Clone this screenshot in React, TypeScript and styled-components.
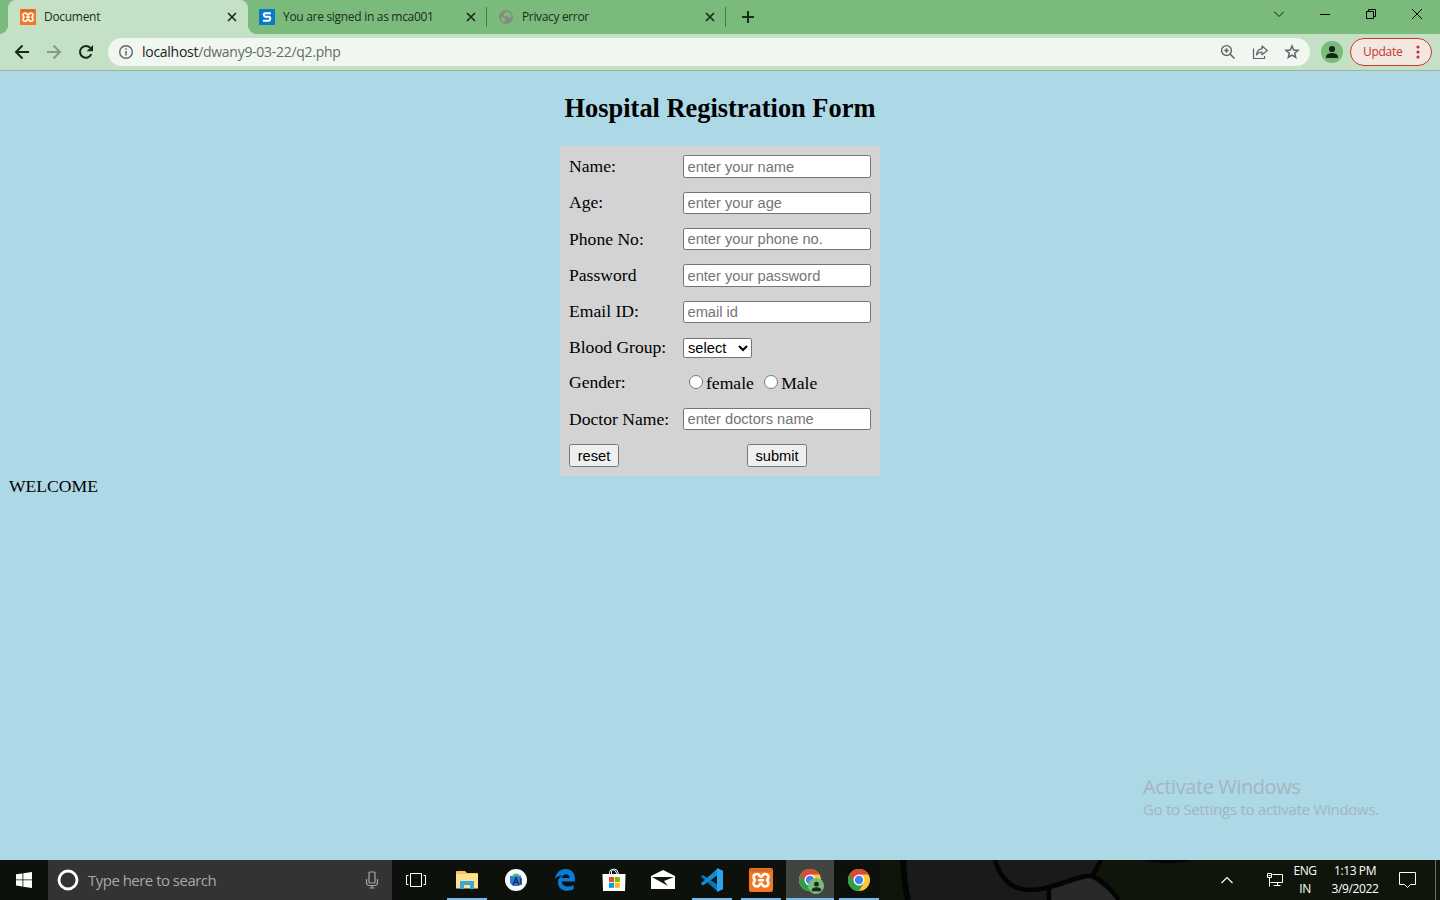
import React from "react";
import styled, { createGlobalStyle } from "styled-components";

const GlobalStyle = createGlobalStyle`
  * { box-sizing: border-box; }
  body { margin: 0; overflow: hidden; }
`;

const ui = `"Open Sans", "Noto Sans", sans-serif`;

const Screen = styled.div`
  position: relative;
  display: flex;
  flex-direction: column;
  width: 1440px;
  height: 900px;
  font-family: ${ui};
`;

/* Browser chrome */
const TabStrip = styled.div`
  display: flex;
  height: 34px;
  padding-left: 8px;
  background: #7aba7b;
`;

const Tab = styled.div<{ $active?: boolean }>`
  position: relative;
  display: flex;
  align-items: center;
  width: ${(p) => (p.$active ? 240 : 239)}px;
  height: 34px;
  padding: 0 9px 0 ${(p) => (p.$active ? 12 : 11)}px;
  border-radius: 8px 8px 0 0;
  background: ${(p) => (p.$active ? "#c5e1c5" : "transparent")};
  color: #1d2b1d;
  &::before, &::after {
    content: "";
    display: ${(p) => (p.$active ? "block" : "none")};
    position: absolute;
    bottom: 0;
    width: 8px;
    height: 8px;
  }
  &::before { left: -8px; background: radial-gradient(circle at 0 0, transparent 7.5px, #c5e1c5 8px); }
  &::after { right: -8px; background: radial-gradient(circle at 100% 0, transparent 7.5px, #c5e1c5 8px); }
`;

const TabDivider = styled.div`
  width: 1px;
  height: 20px;
  margin: 7px 0 0 -1px;
  background: #4b774c;
`;

const Text = styled.span<{ $size: number; $spacing?: number; $color?: string }>`
  font-size: ${(p) => p.$size}px;
  letter-spacing: ${(p) => p.$spacing ?? 0}px;
  color: ${(p) => p.$color ?? "inherit"};
  white-space: nowrap;
  line-height: 1.35;
`;

const TabTitle = styled(Text)`
  flex: 1;
  margin-left: 8px;
`;

const NewTab = styled.div`
  display: flex;
  align-items: center;
  margin-left: 14px;
`;

const WindowButtons = styled.div`
  display: flex;
  margin-left: auto;
  height: 28px;
`;

const WindowButton = styled.div`
  display: flex;
  align-items: center;
  justify-content: center;
  width: 46px;
`;

const Toolbar = styled.div`
  display: flex;
  align-items: center;
  height: 37px;
  padding: 0 8px 1px 6px;
  background: #c5e1c5;
  border-bottom: 1px solid #9eb49e;
`;

const ToolButton = styled.div`
  display: flex;
  align-items: center;
  justify-content: center;
  width: 32px;
`;

const AddressBar = styled.div`
  display: flex;
  align-items: center;
  width: 1202px;
  height: 28px;
  margin-left: 6px;
  padding: 0 2px 0 10px;
  border-radius: 14px;
  background: #f0f7f0;
`;

const Url = styled(Text)`
  flex: 1;
  margin-left: 8px;
  padding-top: 2px;
`;

const Host = styled.span`
  color: #1d221e;
`;

const Avatar = styled.div`
  display: flex;
  align-items: center;
  justify-content: center;
  width: 22px;
  height: 22px;
  margin: 0 7px 0 11px;
  border-radius: 50%;
  background: #7aba7b;
`;

const UpdateButton = styled.div`
  display: flex;
  align-items: center;
  justify-content: space-between;
  width: 82px;
  height: 28px;
  padding: 1px 11px 0 12px;
  border: 1px solid #d0342c;
  border-radius: 14px;
  background: #f2e8e1;
  color: #c5352b;
`;

/* Page */
const Page = styled.main`
  flex: 1;
  padding: 1px 9px 0;
  background: #add8e6;
  font-family: "Liberation Serif", serif;
  font-size: 17.6px;
  color: #000;
`;

const Heading = styled.h2`
  margin: 21px 0 0;
  font-size: 26.4px;
  line-height: 31px;
  text-align: center;
`;

const Form = styled.form`
  display: grid;
  grid-template-columns: 114px 188px;
  grid-template-rows: repeat(5, 36.35px) 35.4px 34.6px 37.6px 35.6px;
  align-items: center;
  width: 320px;
  height: 330px;
  margin: 22px auto 0;
  padding: 2.4px 9px 0;
  background: #d3d3d3;
`;

const Label = styled.label<{ $drop?: number }>`
  padding-top: ${(p) => p.$drop ?? 0}px;
`;

const Field = styled.input`
  width: 188px;
  height: 22.4px;
  margin: 0;
  padding: 1px 3.5px;
  border: 1px solid #767676;
  border-radius: 2.2px;
  background: #fff;
  font: 14.667px "Liberation Sans", sans-serif;
  &::placeholder { color: #757575; }
`;

const Select = styled.select`
  width: 69px;
  height: 20px;
  margin: 0;
  border: 1px solid #767676;
  border-radius: 2px;
  background: #fff;
  color: #000;
  font: 14.667px "Liberation Sans", sans-serif;
`;

const RadioGroup = styled.div`
  display: flex;
  align-items: center;
  padding-top: 1px;
`;

const Radio = styled.input`
  width: 14px;
  height: 14px;
  margin: 0 3.5px 2px 5.5px;
  & ~ & { margin-left: 9.8px; }
`;

const FormButton = styled.button<{ $width: number; $offset?: number }>`
  width: ${(p) => p.$width}px;
  height: 23px;
  margin: 0 0 0 ${(p) => p.$offset ?? 0}px;
  padding: 1px 0 0;
  border: 1px solid #767676;
  border-radius: 2.5px;
  background: #efefef;
  color: #000;
  font: 14.667px "Liberation Sans", sans-serif;
`;

const Welcome = styled.div`
  line-height: 20px;
`;

const Watermark = styled.div`
  position: absolute;
  left: 1143px;
  top: 773px;
  display: flex;
  flex-direction: column;
  color: #a3b6be;
  & > span + span { margin-top: -1px; }
`;

/* Taskbar */
const Taskbar = styled.footer`
  position: relative;
  display: flex;
  height: 40px;
  background: #0c120b;
  color: #fff;
`;

const Wallpaper = styled.svg`
  position: absolute;
  left: 880px;
  top: 0;
`;

const Start = styled.div`
  display: flex;
  align-items: center;
  justify-content: center;
  width: 48px;
`;

const Search = styled.div`
  display: flex;
  align-items: center;
  width: 344px;
  padding: 0 13px 0 9px;
  background: #333;
  color: #a8a8a8;
`;

const SearchText = styled(Text)`
  flex: 1;
  margin-left: 9px;
`;

const Apps = styled.div`
  display: flex;
  gap: 1px;
`;

const AppButton = styled.div<{ $state?: "open" | "active" }>`
  position: relative;
  display: flex;
  align-items: center;
  justify-content: center;
  width: 48px;
  height: 40px;
  background: ${(p) => (p.$state === "active" ? "#40463f" : "transparent")};
  &:first-child { margin-right: 2px; }
  &::after {
    content: "";
    display: ${(p) => (p.$state ? "block" : "none")};
    position: absolute;
    bottom: 0;
    left: ${(p) => (p.$state === "active" ? 0 : 4)}px;
    right: ${(p) => (p.$state === "active" ? 0 : 4)}px;
    height: 2px;
    background: #76b9ed;
  }
`;

const Tray = styled.div`
  position: relative;
  display: flex;
  align-items: center;
  margin-left: auto;
  padding-right: 5px;
`;

const TrayIcon = styled.div<{ $right: number }>`
  display: flex;
  margin-right: ${(p) => p.$right}px;
`;

const TrayText = styled.div<{ $width: number; $right: number }>`
  display: flex;
  flex-direction: column;
  align-items: center;
  width: ${(p) => p.$width}px;
  margin-right: ${(p) => p.$right}px;
  & > span { line-height: 18px; }
`;

const ShowDesktop = styled.div`
  position: absolute;
  right: 4px;
  top: 0;
  width: 1px;
  height: 40px;
  background: #6b6f6b;
`;

const Xampp = ({ size }: { size: number }) => (
  <svg width={size} height={size} viewBox="0 0 24 24">
    <rect width="24" height="24" rx="2" fill="#f37623" />
    <path d="M1 1h22v3H1z" fill="#d96a25" />
    <path
      d="M8.200 6C4.500 6 3.300 9.200 6 12.200 3.300 15 4.500 18.500 8.200 18.500c2.600 0 2-3 3.800-3s1.200 3 3.800 3c3.700 0 4.900-3.500 2.200-6.300C20.700 9.200 19.500 6 15.800 6c-2.600 0-2 3-3.800 3s-1.200-3-3.800-3ZM9.200 12.200h5.600"
      fill="none" stroke="#fff" strokeWidth="2.600" strokeLinejoin="round"
    />
  </svg>
);

const Close = () => (
  <svg width="14" height="14" viewBox="0 0 14 14">
    <path d="M3 3l8 8M11 3l-8 8" stroke="#1d2b1d" strokeWidth="1.700" />
  </svg>
);

const Person = ({ size }: { size: number }) => (
  <svg width={size} height={size} viewBox="0 0 14 14">
    <circle cx="7" cy="4" r="3.100" fill="#17271a" />
    <path d="M1 13v-1.500C1 9 5 8 7 8s6 1 6 3.500V13z" fill="#17271a" />
  </svg>
);

const Chrome = () => (
  <svg width="24" height="24" viewBox="0 0 24 24">
    <circle cx="12" cy="12" r="11" fill="#fcc934" />
    <path d="M12 12L2.470 6.500A11 11 0 0 0 12 23L16.800 14.800Z" fill="#2da04b" />
    <path d="M2.470 6.500A11 11 0 0 1 21.530 6.500H12V12L7.200 14.700Z" fill="#d94a3d" />
    <circle cx="12" cy="12" r="5.500" fill="#fff" />
    <circle cx="12" cy="12" r="4.200" fill="#4583ec" />
  </svg>
);

const ProfileBadge = styled.div`
  position: absolute;
  left: 22px;
  top: 18px;
  display: flex;
  align-items: center;
  justify-content: center;
  width: 16px;
  height: 16px;
  border-radius: 50%;
  background: #7aba7b;
`;

const rows = [
  ["Name:", "enter your name"],
  ["Age:", "enter your age"],
  ["Phone No:", "enter your phone no."],
  ["Password", "enter your password"],
  ["Email ID:", "email id"],
];

export default function App() {
  return (
    <Screen>
      <GlobalStyle />
      <TabStrip>
        <Tab $active>
          <Xampp size={16} />
          <TabTitle $size={12} $spacing={-0.3}>Document</TabTitle>
          <Close />
        </Tab>
        <Tab>
          <svg width="16" height="16" viewBox="0 0 16 16">
            <path d="M0 0h16v16H0z" fill="#0b78d0" />
            <path d="M12 4.300H6.300Q4.800 4.300 4.800 5.800T6.300 7.800H9.800Q11.300 7.800 11.300 9.600T9.800 11.700H4" fill="none" stroke="#fff" strokeWidth="2" />
          </svg>
          <TabTitle $size={12} $spacing={-0.3}>You are signed in as mca001</TabTitle>
          <Close />
        </Tab>
        <TabDivider />
        <Tab>
          <svg width="16" height="16" viewBox="0 0 16 16">
            <circle cx="8" cy="8" r="7" fill="#868b86" />
            <path d="M8.500 2.800L6 4.500 5.800 6.500 8 7.300 10.300 7.800 11 9.300 13.200 8.500C13.600 5.500 12 3 8.500 2.800M2.500 8.500H5.500Q7.800 8.800 7.800 10.800H6.500V13.200Q3 12 2.500 8.500" fill="#7aba7b" />
          </svg>
          <TabTitle $size={12} $spacing={-0.35}>Privacy error</TabTitle>
          <Close />
        </Tab>
        <TabDivider />
        <NewTab>
          <svg width="16" height="16" viewBox="0 0 16 16">
            <path d="M8 2v12M2 8h12" stroke="#1d2b1d" strokeWidth="2" />
          </svg>
        </NewTab>
        <WindowButtons>
          <WindowButton>
            <svg width="10" height="10" viewBox="0 0 10 10"><path d="M0 2.500l5 5 5-5" fill="none" stroke="#111" /></svg>
          </WindowButton>
          <WindowButton>
            <svg width="10" height="10" viewBox="0 0 10 10"><path d="M0 5.500h10" stroke="#000" /></svg>
          </WindowButton>
          <WindowButton>
            <svg width="10" height="10" viewBox="0 0 10 10"><path d="M.5 2.500h7v7h-7zM2.500 2.500v-2h7v7h-2" fill="none" stroke="#000" /></svg>
          </WindowButton>
          <WindowButton>
            <svg width="10" height="10" viewBox="0 0 10 10"><path d="M0 0l10 10M10 0L0 10" stroke="#000" /></svg>
          </WindowButton>
        </WindowButtons>
      </TabStrip>

      <Toolbar>
        <ToolButton>
          <svg width="16" height="16" viewBox="0 0 16 16"><path d="M15 8H2.500M8.500 1.500L2 8l6.500 6.500" fill="none" stroke="#1b261b" strokeWidth="2" /></svg>
        </ToolButton>
        <ToolButton>
          <svg width="16" height="16" viewBox="0 0 16 16"><path d="M1 8h12.500M7.500 1.500L14 8l-6.500 6.500" fill="none" stroke="#869a86" strokeWidth="2" /></svg>
        </ToolButton>
        <ToolButton>
          <svg width="16" height="16" viewBox="0 0 16 16">
            <path d="M13.300 10.200A5.900 5.900 0 1 1 12.300 3.900" fill="none" stroke="#1b261b" strokeWidth="2" />
            <path d="M15 1v6.300H8.700z" fill="#1b261b" />
          </svg>
        </ToolButton>
        <AddressBar>
          <svg width="16" height="16" viewBox="0 0 16 16">
            <circle cx="8" cy="8" r="6.300" fill="none" stroke="#5f6368" strokeWidth="1.400" />
            <path d="M8 7v4.500M8 4.300v1.500" stroke="#5f6368" strokeWidth="1.500" />
          </svg>
          <Url $size={14} $spacing={-0.28} $color="#656b67">
            <Host>localhost</Host>/dwany9-03-22/q2.php
          </Url>
          <ToolButton>
            <svg width="16" height="16" viewBox="0 0 16 16"><circle cx="6.500" cy="6.500" r="4.900" fill="none" stroke="#5f6368" strokeWidth="1.400" /><path d="M10 10l4.500 4.500M6.500 4.300v4.400M4.300 6.500h4.400" stroke="#5f6368" strokeWidth="1.500" /></svg>
          </ToolButton>
          <ToolButton>
            <svg width="16" height="16" viewBox="0 0 16 16"><path d="M1.500 4.500v10h11V12M4.500 11c.3-4 1.500-6 5.500-6.200V2L15.300 6.500 10 10.700V8C7.500 8 6 9 4.500 11z" fill="none" stroke="#5f6368" strokeWidth="1.200" strokeLinejoin="round" /></svg>
          </ToolButton>
          <ToolButton>
            <svg width="16" height="16" viewBox="0 0 16 16"><path d="M8 2l1.700 4 4.300.4-3.300 2.800 1 4.200L8 11.200l-3.700 2.200 1-4.200L2 6.400 6.300 6z" fill="none" stroke="#5f6368" strokeWidth="1.500" /></svg>
          </ToolButton>
        </AddressBar>
        <Avatar><Person size={14} /></Avatar>
        <UpdateButton>
          <Text $size={12} $spacing={-0.3}>Update</Text>
          <svg width="4" height="14" viewBox="0 0 4 14" fill="#c5352b"><circle cx="2" cy="2" r="1.600" /><circle cx="2" cy="7" r="1.600" /><circle cx="2" cy="12" r="1.600" /></svg>
        </UpdateButton>
      </Toolbar>

      <Page>
        <Heading>Hospital Registration Form</Heading>
        <Form>
          {rows.map(([label, hint]) => (
            <React.Fragment key={label}>
              <Label>{label}</Label>
              <Field placeholder={hint} />
            </React.Fragment>
          ))}
          <Label>Blood Group:</Label>
          <Select><option>select</option></Select>
          <Label>Gender:</Label>
          <RadioGroup>
            <Radio type="radio" name="gender" />female
            <Radio type="radio" name="gender" />Male
          </RadioGroup>
          <Label $drop={1.5}>Doctor Name:</Label>
          <Field placeholder="enter doctors name" />
          <FormButton type="reset" $width={50}>reset</FormButton>
          <FormButton type="button" $width={60} $offset={64}>submit</FormButton>
        </Form>
        <Welcome>WELCOME</Welcome>
      </Page>

      <Watermark>
        <Text $size={20} $spacing={-0.42}>Activate Windows</Text>
        <Text $size={15} $spacing={-0.28}>Go to Settings to activate Windows.</Text>
      </Watermark>

      <Taskbar>
        <Wallpaper width="560" height="40" viewBox="0 0 560 40">
          <path d="M0 0h560v40H0z" fill="#10150c" />
          <path d="M25 0h196l-10 17 30 23H30z" fill="#191a1b" />
          <path d="M170 30L210 17 240 40H170z" fill="#292929" />
          <path d="M23 0q1 25 5 40" fill="none" stroke="#030503" strokeWidth="6" />
          <path d="M115 0q9 30 35 30c25 0 45-15 60-14 12 2 20 13 29 24M213 15l8-15M169 29v11" fill="none" stroke="#030403" strokeWidth="4.500" />
          <path d="M262 0q25 6 50 0z" fill="#030503" />
        </Wallpaper>
        <Start>
          <svg width="16" height="16" viewBox="0 0 16 16" fill="#fff"><path d="M0 2.300L6.500 1.400V7.500H0zM7.300 1.300L16 0v7.500H7.300zM0 8.300h6.500v6.200L0 13.600zM7.300 8.300H16V16l-8.700-1.300z" /></svg>
        </Start>
        <Search>
          <svg width="22" height="22" viewBox="0 0 22 22"><circle cx="11" cy="11" r="9" fill="none" stroke="#fff" strokeWidth="2.800" /></svg>
          <SearchText $size={15} $spacing={-0.52}>Type here to search</SearchText>
          <svg width="14" height="18" viewBox="0 0 14 18" fill="none" stroke="#a8a8a8" strokeWidth="1.200"><rect x="4" y="1" width="6" height="11" rx="1" /><path d="M1.500 8V11q0 3.500 3 3.500h5q3 0 3-3.500V8M7 14.500v2.500M4.500 17h5" /></svg>
        </Search>
        <Apps>
          <AppButton>
            <svg width="20" height="14" viewBox="0 0 20 14"><path d="M4.500.5h11v13h-11zM2.500 2.500h-2v9h2M17.500 2.500h2v9h-2" fill="none" stroke="#fff" /></svg>
          </AppButton>
          <AppButton $state="open">
            <svg width="22" height="20" viewBox="0 0 22 20"><path d="M0 1.500Q0 1 1 1h8l2 2h10q1 0 1 1v14H0z" fill="#f5c95b" /><path d="M0 4h22v14.500H0z" fill="#ffe08e" /><path d="M4 11h14v8h-4v-4H8v4H4z" fill="#37a9df" /></svg>
          </AppButton>
          <AppButton>
            <svg width="22" height="22" viewBox="0 0 22 22"><circle cx="11" cy="11" r="11" fill="#f8fafa" /><path d="M5 7l11-.5V14l-2 3H8l-3-3z" fill="#3475e7" /><path d="M7.500 7.500q0-3 3.500-3t3.500 3z" fill="#3ac783" /><path d="M8 16l3-7 3 7M9 13.500h4M16 9v7" fill="none" stroke="#12334f" strokeWidth="1.500" /></svg>
          </AppButton>
          <AppButton>
            <svg width="22" height="22" viewBox="0 0 22 22"><path d="M1 10C2 4 6 0 11.500 0 18 0 21 4.500 21 10v2.500H7.800c0 5 7 6.500 11.800 3.500v4.300C13 23.500 4 21.500 4 13.500c0-3.500 2-6 4.700-7.300C5 6.500 2.500 7.800 1 10zm7-1h7.500c0-5-6.500-5-7.500 0z" fill="#0a7bdb" /></svg>
          </AppButton>
          <AppButton>
            <svg width="24" height="24" viewBox="0 0 24 24"><path d="M7.500 6V4.500q0-3 3-3t4.500 4.500M9.500 6V4q0-3 3-3t4 5" fill="none" stroke="#fff" strokeWidth="1" /><path d="M.5 6h23l-.5 17H1z" fill="#fff" /><path d="M7 9h5v5H7z" fill="#e8502b" /><path d="M12.800 9h5v5h-5z" fill="#7fb900" /><path d="M7 14.800h5v5H7z" fill="#009fe8" /><path d="M12.800 14.800h5v5h-5z" fill="#fdb813" /></svg>
          </AppButton>
          <AppButton>
            <svg width="24" height="20" viewBox="0 0 24 20"><path d="M0 6L12 0l12 6v13H0z" fill="#fff" /><path d="M1 7h22L13 11l4 5z" fill="#11170f" /></svg>
          </AppButton>
          <AppButton $state="open">
            <svg width="24" height="24" viewBox="0 0 24 24"><path d="M3 7L.7 8.500 17 23l1-6z" fill="#0c74bb" /><path d="M.7 15.500L3 17.500 18 7l-1-6z" fill="#168bd1" /><path d="M17 0l6 2.700v18.600L17 24z" fill="#2ba5f1" /></svg>
          </AppButton>
          <AppButton $state="open"><Xampp size={24} /></AppButton>
          <AppButton $state="active"><Chrome /><ProfileBadge><Person size={11} /></ProfileBadge></AppButton>
          <AppButton $state="open"><Chrome /></AppButton>
        </Apps>
        <Tray>
          <TrayIcon $right={34}>
            <svg width="12" height="8" viewBox="0 0 12 8"><path d="M.5 7L6 1.500 11.500 7" fill="none" stroke="#fff" strokeWidth="1.200" /></svg>
          </TrayIcon>
          <TrayIcon $right={9}>
            <svg width="16" height="14" viewBox="0 0 16 14" fill="none" stroke="#fff"><path d="M5.500 1.500h10v8H3.500M.5.500h4v4h-4zM2.500 4.500v9M10.500 9.500v3M6.500 12.500h7M1.500 2.500h2" /></svg>
          </TrayIcon>
          <TrayText $width={26} $right={12}>
            <Text $size={12} $spacing={-0.4}>ENG</Text>
            <Text $size={12} $spacing={-0.4}>IN</Text>
          </TrayText>
          <TrayText $width={50} $right={19}>
            <Text $size={12} $spacing={-0.4}>1:13 PM</Text>
            <Text $size={12} $spacing={-0.4}>3/9/2022</Text>
          </TrayText>
          <TrayIcon $right={19}>
            <svg width="17" height="17" viewBox="0 0 17 17"><path d="M.5 .5h16v12h-5l-3 3-3-3h-5z" fill="none" stroke="#fff" /></svg>
          </TrayIcon>
          <ShowDesktop />
        </Tray>
      </Taskbar>
    </Screen>
  );
}
